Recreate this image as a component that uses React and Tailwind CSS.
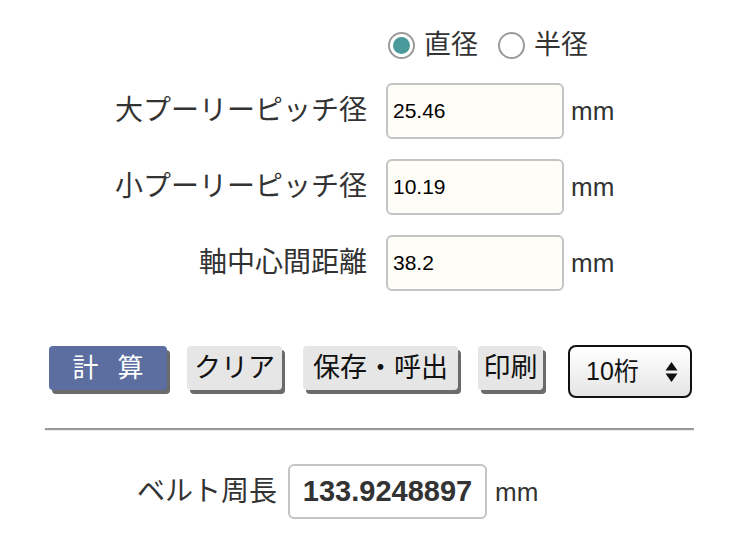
import React from "react";

const font = "font-['Liberation_Sans','Noto_Sans_CJK_JP',sans-serif]";

function Row({ label, value }) {
  return (
    <div className="flex items-center h-[56px]">
      <div className="w-[367px] text-right text-[28px] text-[#333] leading-none">{label}</div>
      <div className="ml-[19px] w-[178px] h-[56px] rounded-[6px] border-2 border-[#c4c4c4] bg-[#fffdf8] flex items-center pl-[5px] text-[21px] text-black">
        {value}
      </div>
      <div className="ml-[7px] text-[26px] text-[#333] leading-none">mm</div>
    </div>
  );
}

function Radio({ checked }) {
  return (
    <div className="w-[27px] h-[27px] rounded-full border-2 border-[#9a9a9a] bg-white flex items-center justify-center">
      {checked && <div className="w-[17px] h-[17px] rounded-full bg-[#4a9a9b]" />}
    </div>
  );
}

export default function App() {
  return (
    <div className={`w-[742px] h-[548px] bg-white ${font} overflow-hidden`}>
      <div className="pt-[31px] flex items-center pl-[388px] h-[59px]">
        <Radio checked />
        <span className="ml-[9px] text-[27px] text-[#333] leading-none">直径</span>
        <div className="ml-[20px]"><Radio /></div>
        <span className="ml-[9px] text-[27px] text-[#333] leading-none">半径</span>
      </div>
      <div className="mt-[24px] flex flex-col gap-[20px]">
        <Row label="大プーリーピッチ径" value="25.46" />
        <Row label="小プーリーピッチ径" value="10.19" />
        <Row label="軸中心間距離" value="38.2" />
      </div>
      <div className="mt-[54px] flex items-start pl-[49px]">
        <div className="mt-[1px] w-[118px] h-[44px] rounded-[4px] bg-[#5c6e9f] shadow-[3px_4px_0_#6b6b6b] flex items-center justify-center text-white text-[26px] leading-none">
          <span>計</span>
          <span className="ml-[19px]">算</span>
        </div>
        <div className="mt-[1px] ml-[20px] w-[95px] h-[44px] rounded-[4px] bg-[#e6e6e6] shadow-[3px_4px_0_#6b6b6b] flex items-center justify-center text-[#111] text-[27px] leading-none">
          クリア
        </div>
        <div className="mt-[1px] ml-[21px] w-[155px] h-[44px] rounded-[4px] bg-[#e6e6e6] shadow-[3px_4px_0_#6b6b6b] flex items-center justify-center text-[#111] text-[27px] leading-none">
          保存・呼出
        </div>
        <div className="mt-[1px] ml-[20px] w-[65px] h-[44px] rounded-[4px] bg-[#e6e6e6] shadow-[3px_4px_0_#6b6b6b] flex items-center justify-center text-[#111] text-[27px] leading-none">
          印刷
        </div>
        <div className="ml-[25px] w-[124px] h-[53px] rounded-[8px] border-2 border-[#111] bg-gradient-to-b from-white to-[#e6e6e6] flex items-center pl-[16px] text-[#111] text-[25px] leading-none">
          <span>10桁</span>
          <svg className="ml-auto mr-[12px]" width="13" height="24" viewBox="0 0 13 24">
            <polygon points="6.5,2 12.5,10.5 0.5,10.5" fill="#111" />
            <polygon points="0.5,13.5 12.5,13.5 6.5,22" fill="#111" />
          </svg>
        </div>
      </div>
      <div className="mt-[30px] ml-[45px] w-[649px] border-t-2 border-t-[#999] border-b border-b-[#ececec]" />
      <div className="mt-[33px] flex items-center">
        <div className="w-[277px] text-right text-[28px] text-[#333] leading-none">ベルト周長</div>
        <div className="ml-[11px] w-[199px] h-[55px] rounded-[6px] border-2 border-[#c4c4c4] bg-white flex items-center justify-center text-[29px] font-bold text-[#333] leading-none">
          133.9248897
        </div>
        <div className="ml-[8px] text-[26px] text-[#333] leading-none">mm</div>
      </div>
    </div>
  );
}
